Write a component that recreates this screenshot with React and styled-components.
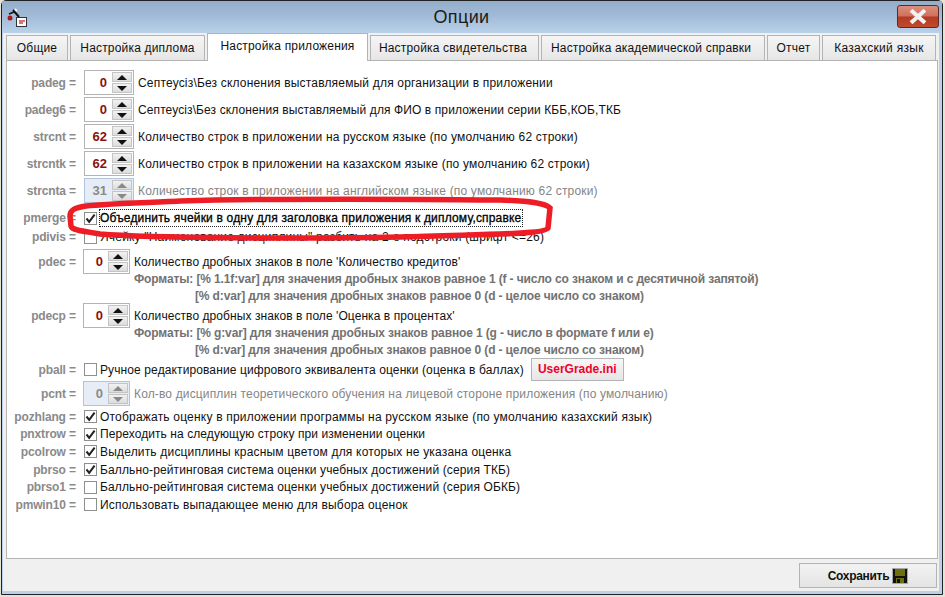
import React from "react";
import styled, { createGlobalStyle } from "styled-components";

const GlobalStyle = createGlobalStyle`
  html, body { margin: 0; padding: 0; height: 100%; }
  body {
    width: 945px;
    height: 597px;
    overflow: hidden;
    background: #e6e2d6;
    font-family: "Liberation Sans", Arial, sans-serif;
    font-size: 12px;
  }
`;

const tabs = [
  { title: "Общие", w: 62 },
  { title: "Настройка диплома", w: 135 },
  { title: "Настройка приложения", w: 161, active: true },
  { title: "Настройка свидетельства", w: 169, pr: 3 },
  { title: "Настройка академической справки", w: 224, pr: 4, ls: 0.16 },
  { title: "Отчет", w: 53 },
  { title: "Казахский язык", w: 114, ls: 0.3 },
];

const Window = styled.div`
  position: relative;
  width: 942px;
  height: 595px;
  margin-left: 1px;
  box-sizing: border-box;
  border: 1px solid #222;
  border-radius: 5px 5px 0 0;
  background: #b9d1ea;
  display: flex;
  flex-direction: column;
`;

const TitleBar = styled.div`
  height: 32px;
  flex: none;
  display: flex;
  align-items: center;
  justify-content: space-between;
  padding: 0 3px 0 4px;
  background: linear-gradient(#92aecb, #a3bcd8 50%, #b9d1ea);
  position: relative;
`;

const Title = styled.div`
  position: absolute;
  left: 0;
  right: 0;
  text-align: center;
  font-size: 18px;
  letter-spacing: 0.4px;
  color: #1c1c1c;
  padding: 1px 21px 0 0;
`;

const CloseBtn = styled.div`
  width: 42px;
  height: 23px;
  margin-top: -1px;
  box-sizing: border-box;
  border: 1px solid #5d2a2a;
  border-radius: 3px;
  background: linear-gradient(#dc8f7f, #cf705f 48%, #b53a21 52%, #c0492e);
  display: flex;
  align-items: center;
  justify-content: center;
  position: relative;
`;

const Body = styled.div`
  flex: 1;
  margin: 0 3px 3px 1px;
  background: #f0f0f0;
  display: flex;
  flex-direction: column;
  padding-left: 3px;
`;

const TabBar = styled.div`
  display: flex;
  gap: 2px;
  height: 28px;
  margin-bottom: -1px;
  align-items: flex-end;
  flex: none;
`;

const Tab = styled.div`
  box-sizing: border-box;
  flex: none;
  width: ${(p) => p.$w}px;
  padding-right: ${(p) => p.$pr || 0}px;
  letter-spacing: ${(p) => p.$ls || 0.18}px;
  text-align: center;
  color: #111;
  border: 1px solid #b4b4b4;
  border-bottom: ${(p) => (p.$active ? "none" : "1px solid #b4b4b4")};
  height: ${(p) => (p.$active ? "28px" : "26px")};
  line-height: 24px;
  background: ${(p) => (p.$active ? "#fff" : "linear-gradient(#f5f5f5, #e6e6e6)")};
  position: relative;
  z-index: ${(p) => (p.$active ? 1 : 0)};
`;

const Panel = styled.div`
  box-sizing: border-box;
  width: 932px;
  height: 499px;
  padding-top: 9px;
  border: 1px solid #b4b4b4;
  background: #fff;
  flex: none;
`;

const Row = styled.div`
  display: flex;
  align-items: center;
  height: ${(p) => p.$h}px;
  margin-bottom: ${(p) => p.$mb || 0}px;
`;

const Label = styled.div`
  width: 72px;
  margin-right: -1px;
  flex: none;
  text-align: right;
  font-weight: bold;
  letter-spacing: -0.15px;
  color: #8a8a8a;
  white-space: pre;
`;

const Spinner = styled.div`
  box-sizing: border-box;
  flex: none;
  width: ${(p) => (p.$narrow ? 47 : 50)}px;
  height: 25px;
  margin-left: ${(p) => (p.$narrow ? 5 : 6)}px;
  margin-right: 3px;
  border: 1px solid ${(p) => (p.$off ? "#b0c4dc" : "#b4b4b4")};
  background: ${(p) => (p.$off ? "#e6edf6" : "#fff")};
  display: flex;
  align-items: stretch;
`;

const SpinValue = styled.div`
  flex: 1;
  text-align: right;
  padding-right: 5px;
  line-height: 23px;
  font-weight: bold;
  font-size: 13px;
  color: ${(p) => (p.$off ? "#8a8a8a" : "#8a1010")};
`;

const SpinButtons = styled.div`
  width: 20px;
  margin: 1px 1px 1px 0;
  display: flex;
  flex-direction: column;
  gap: 1px;
`;

const SpinButton = styled.div`
  flex: 1;
  display: flex;
  align-items: center;
  justify-content: center;
  background: linear-gradient(#f2f2f2, #dcdcdc);
  border: 1px solid #c4c4c4;
  &::after {
    content: "";
    border-left: 5px solid transparent;
    border-right: 5px solid transparent;
    ${(p) => (p.$down ? "border-top" : "border-bottom")}: 5px solid ${(p) => (p.$off ? "#8a8a8a" : "#111")};
  }
`;

const Check = styled.div`
  box-sizing: border-box;
  flex: none;
  width: 13px;
  height: 13px;
  margin: 0 2px 0 6px;
  border: 1px solid #8e8f8f;
  background: #fff;
  display: flex;
  align-items: center;
  justify-content: center;
`;

const Text = styled.div`
  white-space: pre;
  letter-spacing: ${(p) => p.$ls || 0.18}px;
  color: ${(p) => (p.$off ? "#858585" : "#111")};
  padding: 0 1px;
  ${(p) => p.$focus && "border: 1px dotted #222; padding: 1px; padding-left: 0; -webkit-text-stroke: 0.3px #000; color: #000;"}
`;

const Note = styled.div`
  margin-left: ${(p) => (p.$deep ? 188 : 127)}px;
  margin-bottom: ${(p) => p.$mb || 0}px;
  height: 17px;
  line-height: 17px;
  font-weight: bold;
  letter-spacing: -0.13px;
  color: #727272;
  white-space: pre;
`;

const IniButton = styled.div`
  box-sizing: border-box;
  width: 93px;
  height: 23px;
  margin-left: 6px;
  border: 1px solid #b4b4b4;
  background: linear-gradient(#f6f6f6, #e6e6e6);
  color: #f0002c;
  font-weight: bold;
  text-align: center;
  line-height: 21px;
`;

const Footer = styled.div`
  flex: 1;
  display: flex;
  justify-content: flex-end;
  align-items: flex-start;
  padding: 4px 2px 0 0;
`;

const SaveButton = styled.div`
  box-sizing: border-box;
  width: 138px;
  height: 25px;
  border: 1px solid #b4b4b4;
  background: linear-gradient(#f2f2f2, #e4e4e4);
  font-weight: bold;
  letter-spacing: -0.3px;
  color: #111;
  display: flex;
  align-items: center;
  justify-content: center;
  gap: 3px;
`;

const Marker = styled.svg`
  position: absolute;
  left: -2px;
  top: -1px;
  pointer-events: none;
`;

const Tick = () => (
  <svg width="11" height="11" viewBox="0 0 11 11">
    <path d="M1.5 5.5 L4.2 8.8 L9.6 1.6" fill="none" stroke="#222" strokeWidth="2" />
  </svg>
);

const NumberBox = ({ value, off, narrow }) => (
  <Spinner $off={off} $narrow={narrow}>
    <SpinValue $off={off}>{value}</SpinValue>
    <SpinButtons>
      <SpinButton $off={off} />
      <SpinButton $off={off} $down />
    </SpinButtons>
  </Spinner>
);

const SpinRow = ({ label, value, text, off, narrow, ls, h = 25, mb = 2 }) => (
  <Row $h={h} $mb={mb}>
    <Label>{label}</Label>
    <NumberBox value={value} off={off} narrow={narrow} />
    <Text $off={off} $ls={ls}>{text}</Text>
  </Row>
);

const CheckRow = ({ label, text, on, focus, ls, h = 17.6, mb = 0 }) => (
  <Row $h={h} $mb={mb}>
    <Label>{label}</Label>
    <Check>{on && <Tick />}</Check>
    <Text $focus={focus} $ls={ls}>{text}</Text>
  </Row>
);

const AppIcon = () => (
  <svg width="22" height="20" viewBox="0 0 22 20">
    <path d="M7 3 L13 10" stroke="#111" strokeWidth="2" fill="none" />
    <path d="M9 2 L11 4" stroke="#f5f5f5" strokeWidth="2" />
    <circle cx="4" cy="11" r="2.5" fill="#b01818" />
    <path d="M3 7 L8 5" stroke="#111" strokeWidth="1.5" />
    <rect x="10.5" y="10.5" width="10" height="9" fill="#fff" stroke="#333" />
    <path d="M13 14 H19 M13 16 H17" stroke="#d04050" strokeWidth="1.5" />
  </svg>
);

const CloseIcon = () => (
  <svg width="18" height="15" viewBox="0 0 18 15">
    <path d="M3.5 2.5 L14.5 12.5 M14.5 2.5 L3.5 12.5" stroke="#f2f2f2" strokeWidth="4" strokeLinecap="square" />
  </svg>
);

const DiskIcon = () => (
  <svg width="16" height="16" viewBox="0 0 16 16">
    <rect width="16" height="16" fill="#a8a8a8" />
    <rect x="1" y="1" width="14" height="14" fill="#111" />
    <rect x="3" y="1" width="10" height="7" fill="#6f6f10" />
    <rect x="4" y="10" width="8" height="5" fill="#6f6f10" />
    <rect x="5" y="11" width="3" height="4" fill="#111" />
  </svg>
);

export default function App() {
  return (
    <>
      <GlobalStyle />
      <Window>
        <TitleBar>
          <AppIcon />
          <Title>Опции</Title>
          <CloseBtn><CloseIcon /></CloseBtn>
        </TitleBar>
        <Body>
          <TabBar>
            {tabs.map((t) => (
              <Tab key={t.title} $active={t.active} $w={t.w} $pr={t.pr} $ls={t.ls}>{t.title}</Tab>
            ))}
          </TabBar>
          <Panel>
            <SpinRow label="padeg = " value="0" text="Септеусіз\Без склонения выставляемый для организации в приложении" />
            <SpinRow label="padeg6 = " value="0" ls={0.1} text="Септеусіз\Без склонения выставляемый для ФИО в приложении серии КББ,КОБ,ТКБ" />
            <SpinRow label="strcnt = " value="62" text="Количество строк в приложении на русском языке (по умолчанию 62 строки)" />
            <SpinRow label="strcntk = " value="62" text="Количество строк в приложении на казахском языке (по умолчанию 62 строки)" />
            <SpinRow label="strcnta = " value="31" off text="Количество строк в приложении на английском языке (по умолчанию 62 строки)" mb={6} />
            <CheckRow label="pmerge = " on focus h={18} text="Объединить ячейки в одну для заголовка приложения к диплому,справке" mb={1} />
            <CheckRow label="pdivis = " h={18} text={'Ячейку "Наименование дисциплины" разбить на 2-е подстроки (шрифт <=26)'} mb={3} />
            <SpinRow label="pdec = " value="0" narrow ls={0.07} text="Количество дробных знаков в поле 'Количество кредитов'" mb={-3} />
            <Note>Форматы: [% 1.1f:var] для значения дробных знаков равное 1 (f - число со знаком и с десятичной запятой)</Note>
            <Note $deep $mb={-2}>[% d:var] для значения дробных знаков равное 0 (d - целое число со знаком)</Note>
            <SpinRow label="pdecp = " value="0" narrow ls={0.07} text="Количество дробных знаков в поле 'Оценка в процентах'" mb={-3} />
            <Note>Форматы: [% g:var] для значения дробных знаков равное 1 (g - число в формате f или e)</Note>
            <Note $deep $mb={-1}>[% d:var] для значения дробных знаков равное 0 (d - целое число со знаком)</Note>
            <Row $h={23}>
              <Label>pball = </Label>
              <Check />
              <Text $ls={0.11}>Ручное редактирование цифрового эквивалента оценки (оценка в баллах)</Text>
              <IniButton>UserGrade.ini</IniButton>
            </Row>
            <SpinRow label="pcnt = " value="0" off narrow ls={0.145} text="Кол-во дисциплин теоретического обучения на лицевой стороне приложения (по умолчанию)" mb={2} />
            <CheckRow label="pozhlang = " on ls={0.2} text="Отображать оценку в приложении программы на русском языке (по умолчанию казахский язык)" />
            <CheckRow label="pnxtrow = " on ls={0.08} text="Переходить на следующую строку при изменении оценки" />
            <CheckRow label="pcolrow = " on text="Выделить дисциплины красным цветом для которых не указана оценка" />
            <CheckRow label="pbrso = " on ls={0.13} text="Балльно-рейтинговая система оценки учебных достижений (серия ТКБ)" />
            <CheckRow label="pbrso1 = " ls={0.13} text="Балльно-рейтинговая система оценки учебных достижений (серия ОБКБ)" />
            <CheckRow label="pmwin10 = " text="Использовать выпадающее меню для выбора оценок" />
          </Panel>
          <Footer>
            <SaveButton>Сохранить <DiskIcon /></SaveButton>
          </Footer>
        </Body>
        <Marker width="945" height="597" viewBox="0 0 945 597">
          <path
            d="M86 206 C74 208 70 210 70 216 L71 226 C72 230 80 231 100 234 C150 238 300 239 400 237 C480 234 545 235 548 228 L550 208 C545 203 530 201 500 200 C400 199 250 199 180 201 C130 203 100 204 86 206 Z"
            fill="none"
            stroke="#ee1c25"
            strokeWidth="5.5"
          />
        </Marker>
      </Window>
    </>
  );
}
